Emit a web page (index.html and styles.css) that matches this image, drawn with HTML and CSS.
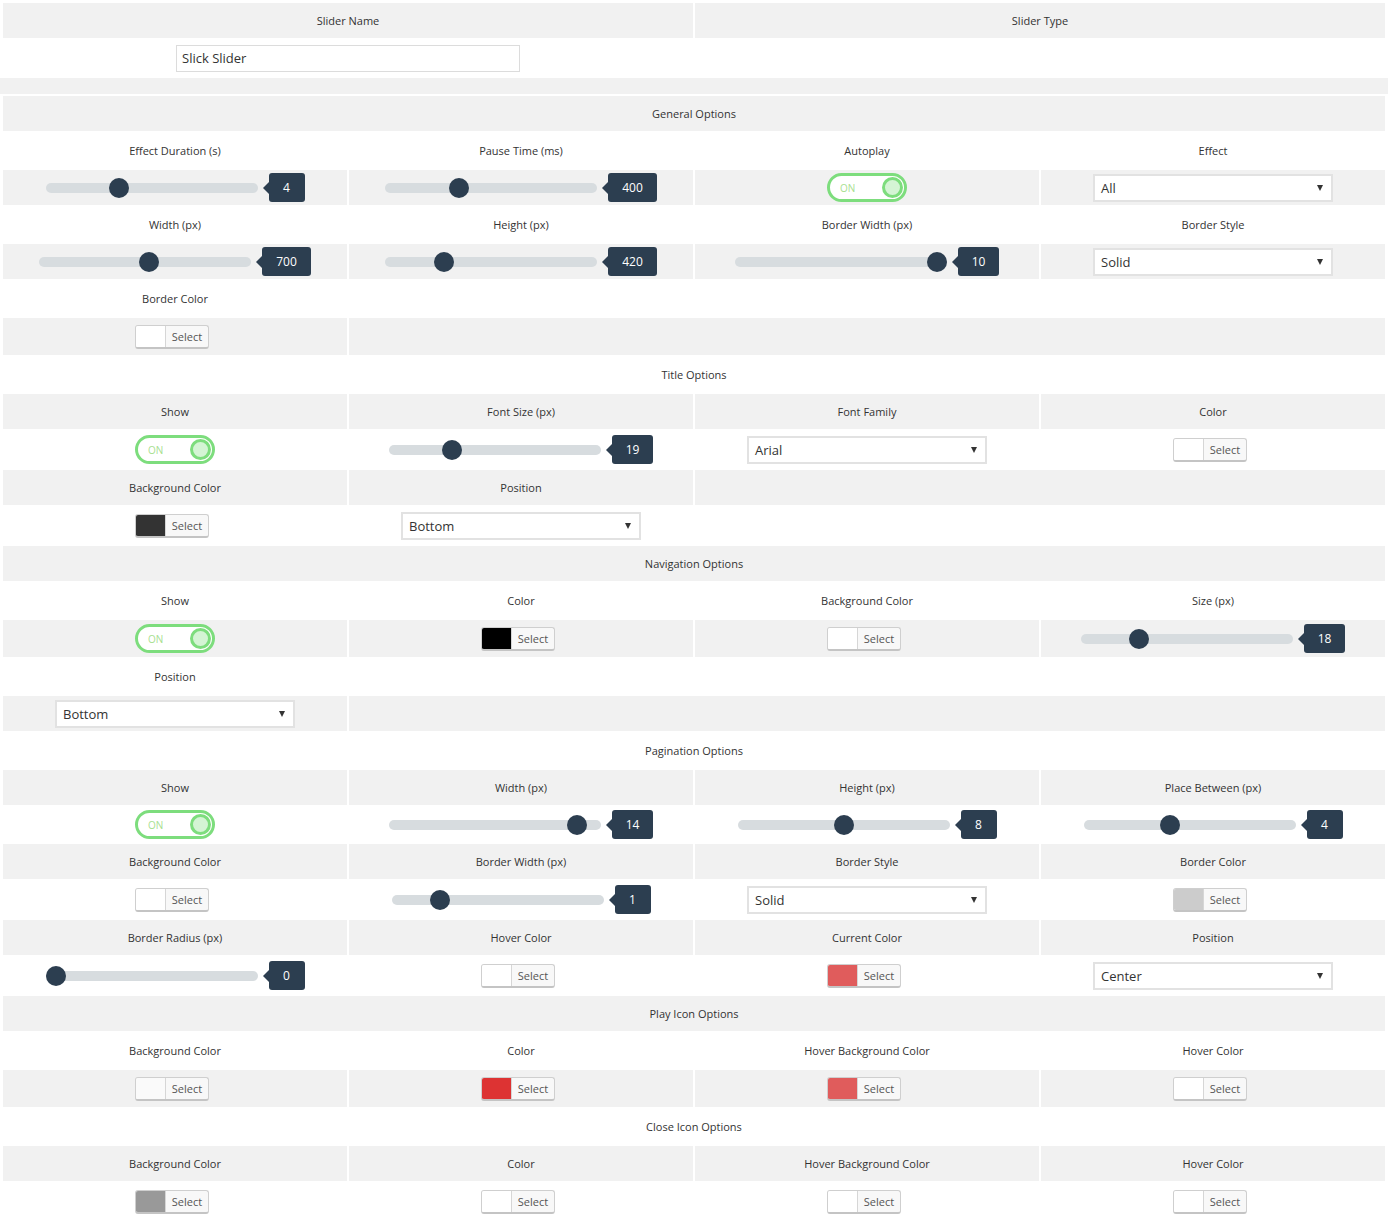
FILE: index.html
```html
<!DOCTYPE html>
<html>
<head>
<meta charset="utf-8">
<link rel="stylesheet" href="styles.css">
</head>
<body>
<div class="top">
  <div class="cell g">Slider Name</div>
  <div class="cell g">Slider Type</div>
  <div class="cell r2"><div class="input">Slick Slider</div></div>
  <div class="cell r2"></div>
</div>
<div class="band"></div>
<div class="grid">
  <!-- General -->
  <div class="cell g full">General Options</div>

  <div class="cell">Effect Duration (s)</div>
  <div class="cell">Pause Time (ms)</div>
  <div class="cell">Autoplay</div>
  <div class="cell">Effect</div>

  <div class="cell g"><div class="slider"><div class="track"><span class="thumb" style="--p:.333"></span></div><span class="val">4</span></div></div>
  <div class="cell g"><div class="slider"><div class="track"><span class="thumb" style="--p:.333"></span></div><span class="val">400</span></div></div>
  <div class="cell g"><div class="toggle"><span class="on">ON</span><span class="knob"></span></div></div>
  <div class="cell g"><div class="select">All<span class="arrow"></span></div></div>

  <div class="cell">Width (px)</div>
  <div class="cell">Height (px)</div>
  <div class="cell">Border Width (px)</div>
  <div class="cell">Border Style</div>

  <div class="cell g"><div class="slider"><div class="track"><span class="thumb" style="--p:.521"></span></div><span class="val">700</span></div></div>
  <div class="cell g"><div class="slider"><div class="track"><span class="thumb" style="--p:.255"></span></div><span class="val">420</span></div></div>
  <div class="cell g"><div class="slider"><div class="track"><span class="thumb" style="--p:1"></span></div><span class="val">10</span></div></div>
  <div class="cell g"><div class="select">Solid<span class="arrow"></span></div></div>

  <div class="cell">Border Color</div>
  <div class="cell s3"></div>

  <div class="cell g t"><div class="picker"><span class="sw sw-white"></span><span class="btn">Select</span></div></div>
  <div class="cell g t s3"></div>

  <!-- Title -->
  <div class="cell full">Title Options</div>

  <div class="cell g">Show</div>
  <div class="cell g">Font Size (px)</div>
  <div class="cell g">Font Family</div>
  <div class="cell g">Color</div>

  <div class="cell t"><div class="toggle"><span class="on">ON</span><span class="knob"></span></div></div>
  <div class="cell t"><div class="slider"><div class="track"><span class="thumb" style="--p:.276"></span></div><span class="val">19</span></div></div>
  <div class="cell t"><div class="select">Arial<span class="arrow"></span></div></div>
  <div class="cell t"><div class="picker"><span class="sw sw-white"></span><span class="btn">Select</span></div></div>

  <div class="cell g">Background Color</div>
  <div class="cell g">Position</div>
  <div class="cell g s2"></div>

  <div class="cell t"><div class="picker"><span class="sw sw-dark"></span><span class="btn">Select</span></div></div>
  <div class="cell t"><div class="select">Bottom<span class="arrow"></span></div></div>
  <div class="cell t s2"></div>

  <!-- Navigation -->
  <div class="cell g full">Navigation Options</div>

  <div class="cell">Show</div>
  <div class="cell">Color</div>
  <div class="cell">Background Color</div>
  <div class="cell">Size (px)</div>

  <div class="cell g t"><div class="toggle"><span class="on">ON</span><span class="knob"></span></div></div>
  <div class="cell g t"><div class="picker"><span class="sw sw-black"></span><span class="btn">Select</span></div></div>
  <div class="cell g t"><div class="picker"><span class="sw sw-white"></span><span class="btn">Select</span></div></div>
  <div class="cell g t"><div class="slider"><div class="track"><span class="thumb" style="--p:.25"></span></div><span class="val">18</span></div></div>

  <div class="cell">Position</div>
  <div class="cell s3"></div>

  <div class="cell g"><div class="select">Bottom<span class="arrow"></span></div></div>
  <div class="cell g s3"></div>

  <!-- Pagination -->
  <div class="cell full">Pagination Options</div>

  <div class="cell g">Show</div>
  <div class="cell g">Width (px)</div>
  <div class="cell g">Height (px)</div>
  <div class="cell g">Place Between (px)</div>

  <div class="cell"><div class="toggle"><span class="on">ON</span><span class="knob"></span></div></div>
  <div class="cell"><div class="slider"><div class="track"><span class="thumb" style="--p:.927"></span></div><span class="val">14</span></div></div>
  <div class="cell"><div class="slider"><div class="track"><span class="thumb" style="--p:.5"></span></div><span class="val">8</span></div></div>
  <div class="cell"><div class="slider"><div class="track"><span class="thumb" style="--p:.4"></span></div><span class="val">4</span></div></div>

  <div class="cell g">Background Color</div>
  <div class="cell g">Border Width (px)</div>
  <div class="cell g">Border Style</div>
  <div class="cell g">Border Color</div>

  <div class="cell t"><div class="picker"><span class="sw sw-white"></span><span class="btn">Select</span></div></div>
  <div class="cell t"><div class="slider"><div class="track"><span class="thumb" style="--p:.2"></span></div><span class="val">1</span></div></div>
  <div class="cell t"><div class="select">Solid<span class="arrow"></span></div></div>
  <div class="cell t"><div class="picker"><span class="sw sw-light"></span><span class="btn">Select</span></div></div>

  <div class="cell g">Border Radius (px)</div>
  <div class="cell g">Hover Color</div>
  <div class="cell g">Current Color</div>
  <div class="cell g">Position</div>

  <div class="cell t"><div class="slider"><div class="track"><span class="thumb" style="--p:0"></span></div><span class="val">0</span></div></div>
  <div class="cell t"><div class="picker"><span class="sw sw-white"></span><span class="btn">Select</span></div></div>
  <div class="cell t"><div class="picker"><span class="sw sw-coral"></span><span class="btn">Select</span></div></div>
  <div class="cell t"><div class="select">Center<span class="arrow"></span></div></div>

  <!-- Play Icon -->
  <div class="cell g full">Play Icon Options</div>

  <div class="cell">Background Color</div>
  <div class="cell">Color</div>
  <div class="cell">Hover Background Color</div>
  <div class="cell">Hover Color</div>

  <div class="cell g t"><div class="picker"><span class="sw sw-offwhite"></span><span class="btn">Select</span></div></div>
  <div class="cell g t"><div class="picker"><span class="sw sw-red"></span><span class="btn">Select</span></div></div>
  <div class="cell g t"><div class="picker"><span class="sw sw-coral"></span><span class="btn">Select</span></div></div>
  <div class="cell g t"><div class="picker"><span class="sw sw-white"></span><span class="btn">Select</span></div></div>

  <!-- Close Icon -->
  <div class="cell full">Close Icon Options</div>

  <div class="cell g">Background Color</div>
  <div class="cell g">Color</div>
  <div class="cell g">Hover Background Color</div>
  <div class="cell g">Hover Color</div>

  <div class="cell t"><div class="picker"><span class="sw sw-gray"></span><span class="btn">Select</span></div></div>
  <div class="cell t"><div class="picker"><span class="sw sw-white"></span><span class="btn">Select</span></div></div>
  <div class="cell t"><div class="picker"><span class="sw sw-white"></span><span class="btn">Select</span></div></div>
  <div class="cell t"><div class="picker"><span class="sw sw-white"></span><span class="btn">Select</span></div></div>
</div>
</body>
</html>
```
FILE: styles.css
```css
* { box-sizing: border-box; }

html, body {
  margin: 0;
  padding: 0;
  background: #fff;
}

body {
  font-family: "Open Sans", "Noto Sans", sans-serif;
  font-size: 11px;
  color: #333;
}

.top {
  display: grid;
  grid-template-columns: 1fr 1fr;
  gap: 2px;
  padding: 3px 3px 2px;
}

.band {
  height: 16px;
  background: #f1f1f1;
}

.grid {
  display: grid;
  grid-template-columns: repeat(4, 1fr);
  gap: 2px;
  padding: 2px 3px 0;
}

.cell {
  height: 35px;
  display: flex;
  align-items: center;
  justify-content: center;
  white-space: nowrap;
}

.cell.r2 { height: 36px; }
.cell.t { height: 37px; }
.cell.g { background: #f1f1f1; }
.cell.full { grid-column: 1 / -1; }
.cell.s3 { grid-column: span 3; }
.cell.s2 { grid-column: span 2; }

/* text input */
.input {
  width: 344px;
  height: 27px;
  border: 1px solid #dcdcdc;
  background: #fff;
  font-size: 13px;
  color: #333;
  padding: 0 5px;
  display: flex;
  align-items: center;
}

/* select */
.select {
  width: 240px;
  height: 28px;
  border: 2px solid #e2e2e2;
  background: #fff;
  font-size: 13px;
  color: #333;
  padding: 0 6px;
  display: flex;
  align-items: center;
  justify-content: space-between;
}

.arrow {
  width: 0;
  height: 0;
  border-left: 3.5px solid transparent;
  border-right: 3.5px solid transparent;
  border-top: 6px solid #333;
  margin-right: 2px;
}

/* range slider */
.slider {
  display: flex;
  align-items: center;
}

.track {
  position: relative;
  width: 212px;
  height: 10px;
  border-radius: 5px;
  background: #d7dcdf;
}

.thumb {
  position: absolute;
  top: -5px;
  left: calc(var(--p) * 192px);
  width: 20px;
  height: 20px;
  border-radius: 50%;
  background: #2c3e50;
}

.val {
  position: relative;
  margin-left: 11px;
  height: 29px;
  min-width: 36px;
  padding: 0 14px;
  border-radius: 3px;
  background: #2c3e50;
  color: #fff;
  font-size: 12px;
  display: flex;
  align-items: center;
  justify-content: center;
}

.val::after {
  content: "";
  position: absolute;
  left: -6px;
  top: 50%;
  margin-top: -6px;
  border-top: 6px solid transparent;
  border-bottom: 6px solid transparent;
  border-right: 6px solid #2c3e50;
}

/* toggle */
.toggle {
  width: 80px;
  height: 29px;
  border: 3px solid #7ddd7d;
  border-radius: 15px;
  background: #fff;
  display: flex;
  align-items: center;
  justify-content: space-between;
  padding: 0 1px 0 10px;
}

.on {
  font-size: 10px;
  color: #a7e08f;
}

.knob {
  width: 21px;
  height: 21px;
  border-radius: 50%;
  border: 3px solid #7ddd7d;
  background: #d4f4d4;
}

/* color picker */
.picker {
  display: flex;
  width: 74px;
  height: 24px;
  margin-right: 6px;
  border: 1px solid #cfcfcf;
  border-bottom: 2px solid #c4c4c4;
  border-radius: 3px;
  overflow: hidden;
  background: #f8f8f8;
}

.sw {
  width: 30px;
  border-right: 1px solid #d6d6d6;
}

.btn {
  flex: 1;
  display: flex;
  align-items: center;
  justify-content: center;
  font-size: 11px;
  color: #555;
}

.sw-white { background: #fff; }
.sw-offwhite { background: #fafafa; }
.sw-dark { background: #333; }
.sw-black { background: #000; }
.sw-light { background: #ccc; }
.sw-coral { background: #e05c5c; }
.sw-red { background: #dd3333; }
.sw-gray { background: #999; }
```
